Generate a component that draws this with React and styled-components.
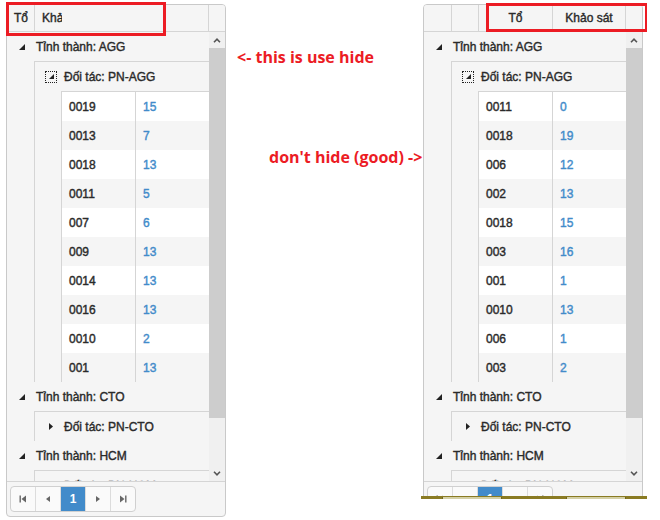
import React from 'react';
import styled, { createGlobalStyle } from 'styled-components';

const GlobalStyle = createGlobalStyle`
  html, body { margin: 0; padding: 0; background: #fff; }
  body { font-family: "Liberation Sans", Arial, sans-serif; }
`;

const LINE = '#d5d5d5';

const Page = styled.div`
  width: 660px;
  height: 520px;
  overflow: hidden;
  box-sizing: border-box;
  padding: 4px 0 0 6px;
  display: flex;
  align-items: flex-start;
`;

const GridWrap = styled.div`
  position: relative;
  width: 220px;
  flex-shrink: 0;
`;

const Frame = styled.div`
  width: 220px;
  height: 513px;
  box-sizing: border-box;
  border: 1px solid #c9c9c9;
  border-radius: 4px;
  background: #f5f5f5;
  display: flex;
  flex-direction: column;
  overflow: hidden;
  font: 12px "Liberation Sans", Arial, sans-serif;
  color: #2a2a2a;
  -webkit-text-stroke: 0.4px currentColor;
`;

const HeaderRow = styled.div`
  display: flex;
  height: 26px;
  flex-shrink: 0;
  border-bottom: 1px solid ${LINE};
  background: #f5f5f5;
`;

const HeaderCell = styled.div`
  width: ${(p) => p.$w}px;
  box-sizing: border-box;
  flex-shrink: 0;
  border-right: ${(p) => (p.$last ? 'none' : `1px solid ${LINE}`)};
  padding: 0 7px;
  display: flex;
  align-items: center;
  justify-content: ${(p) => (p.$center ? 'center' : 'flex-start')};
  white-space: nowrap;
  overflow: hidden;
`;

const ClippedLabel = styled.span`
  display: inline-block;
  max-width: ${(p) => p.$max}px;
  overflow: hidden;
  white-space: nowrap;
`;

const Body = styled.div`
  display: flex;
  height: 449px;
  flex-shrink: 0;
`;

const Content = styled.div`
  width: 202px;
  flex-shrink: 0;
  overflow: hidden;
`;

const ScrollBar = styled.div`
  width: 16px;
  display: flex;
  flex-direction: column;
  background: #f0f0f0;
`;

const ScrollBtn = styled.div`
  height: 16px;
  flex-shrink: 0;
  display: flex;
  align-items: center;
  justify-content: center;
`;

const Thumb = styled.div`
  height: 370px;
  flex-shrink: 0;
  background: #cdcdcd;
`;

const Track = styled.div`
  flex: 1;
`;

const L1Row = styled.div`
  height: 29px;
  display: flex;
  align-items: center;
  padding-left: 12px;
  gap: 11px;
  white-space: nowrap;
`;

const L1Children = styled.div`
  margin-left: 27px;
  border-left: 1px solid ${LINE};
`;

const L2Row = styled.div`
  height: 29px;
  border-top: 1px solid ${LINE};
  display: flex;
  align-items: center;
  padding-left: 10px;
  gap: 7px;
  white-space: nowrap;
`;

const IconBox = styled.span`
  width: 12px;
  height: 12px;
  box-sizing: border-box;
  display: flex;
  align-items: center;
  justify-content: center;
  border: 1px dotted ${(p) => (p.$focus ? '#222' : 'transparent')};
`;

const DataBlock = styled.div`
  margin-left: 26px;
  border-left: 1px solid ${LINE};
  border-top: 1px solid ${LINE};
`;

const DataRow = styled.div`
  display: flex;
  height: 29px;
  background: ${(p) => (p.$alt ? '#f5f5f5' : '#fff')};
`;

const DataCell = styled.div`
  width: 73px;
  flex-shrink: 0;
  box-sizing: border-box;
  padding-left: 7px;
  display: flex;
  align-items: center;
  color: ${(p) => (p.$link ? '#428bca' : '#2a2a2a')};
  & + & {
    width: 74px;
    border-left: 1px solid ${LINE};
  }
`;

const PagerBar = styled.div`
  height: 34px;
  flex-shrink: 0;
  border-top: 1px solid ${LINE};
  padding: 4px 0 0 3px;
  box-sizing: content-box;
`;

const PagerGroup = styled.div`
  display: inline-flex;
  height: 26px;
  box-sizing: border-box;
  border: 1px solid #d0d0d0;
  border-radius: 4px;
  overflow: hidden;
  background: #fafafa;
`;

const PageBtn = styled.div`
  width: 24px;
  height: 24px;
  display: flex;
  align-items: center;
  justify-content: center;
  background: ${(p) => (p.$active ? '#428bca' : 'transparent')};
  color: ${(p) => (p.$active ? '#fff' : '#555')};
  font-weight: bold;
  -webkit-text-stroke: 0;
  & + & {
    border-left: 1px solid #dcdcdc;
  }
`;

const RedBox = styled.div`
  position: absolute;
  left: ${(p) => p.$x}px;
  top: ${(p) => p.$y}px;
  width: ${(p) => p.$w}px;
  height: ${(p) => p.$h}px;
  box-sizing: border-box;
  border: 3px solid #ec1c24;
  pointer-events: none;
`;

const Middle = styled.div`
  width: 195px;
  flex-shrink: 0;
  display: flex;
  flex-direction: column;
  font: bold 16px "Open Sans", "Liberation Sans", sans-serif;
  line-height: 22px;
  color: #ec1c24;
`;

const Note = styled.div`
  margin-top: ${(p) => p.$top}px;
  margin-left: ${(p) => p.$left}px;
  white-space: nowrap;
`;

const RightCol = styled.div`
  width: 226px;
  margin-top: -2px;
  flex-shrink: 0;
  display: flex;
  flex-direction: column;
`;

const ClipBox = styled.div`
  height: 494px;
  padding: 2px 0 0 2px;
  box-sizing: border-box;
  overflow: hidden;
`;

const Strip = styled.div`
  height: 3px;
  width: 226px;
  background: #8a7b23;
  position: relative;
`;

const StripBox = styled.div`
  position: absolute;
  left: ${(p) => p.$x}px;
  width: ${(p) => p.$w}px;
  top: 1px;
  height: 2px;
  background: #d4d0a6;
  border-left: 1px solid #6f651c;
  border-right: 1px solid #6f651c;
`;

const Collapse = ({ size = 6 }) => (
  <svg width={size} height={size} viewBox="0 0 6 6">
    <polygon points="6,0 6,6 0,6" fill="#222" />
  </svg>
);

const Expand = () => (
  <svg width="4" height="7" viewBox="0 0 4 7">
    <polygon points="0,0 4,3.5 0,7" fill="#222" />
  </svg>
);

const Chevron = ({ up }) => (
  <svg width="8" height="5" viewBox="0 0 8 5">
    <polyline
      points={up ? '1,4.2 4,1.2 7,4.2' : '1,0.8 4,3.8 7,0.8'}
      fill="none"
      stroke="#555"
      strokeWidth="1.6"
    />
  </svg>
);

const PagerIcon = ({ kind }) => {
  const c = '#666';
  if (kind === 'first')
    return (
      <svg width="8" height="8" viewBox="0 0 8 8">
        <rect x="0.5" y="0.5" width="1.4" height="7" fill={c} />
        <polygon points="7,0.5 7,7.5 2.5,4" fill={c} />
      </svg>
    );
  if (kind === 'prev')
    return (
      <svg width="6" height="8" viewBox="0 0 6 8">
        <polygon points="5,1 5,7 1,4" fill={c} />
      </svg>
    );
  if (kind === 'next')
    return (
      <svg width="6" height="8" viewBox="0 0 6 8">
        <polygon points="1,1 1,7 5,4" fill={c} />
      </svg>
    );
  return (
    <svg width="8" height="8" viewBox="0 0 8 8">
      <polygon points="1,0.5 1,7.5 5.5,4" fill={c} />
      <rect x="6.1" y="0.5" width="1.4" height="7" fill={c} />
    </svg>
  );
};

const leftRows = [
  ['0019', 15], ['0013', 7], ['0018', 13], ['0011', 5], ['007', 6],
  ['009', 13], ['0014', 13], ['0016', 13], ['0010', 2], ['001', 13],
];

const rightRows = [
  ['0011', 0], ['0018', 19], ['006', 12], ['002', 13], ['0018', 15],
  ['003', 16], ['001', 1], ['0010', 13], ['006', 1], ['003', 2],
];

function GridBody({ rows }) {
  return (
    <Content>
      <L1Row>
        <Collapse />
        <span>Tỉnh thành: AGG</span>
      </L1Row>
      <L1Children>
        <L2Row>
          <IconBox $focus>
            <Collapse size={5} />
          </IconBox>
          <span>Đối tác: PN-AGG</span>
        </L2Row>
        <DataBlock>
          {rows.map(([code, n], i) => (
            <DataRow key={i} $alt={i % 2 === 1}>
              <DataCell>{code}</DataCell>
              <DataCell $link>{n}</DataCell>
            </DataRow>
          ))}
        </DataBlock>
      </L1Children>
      <L1Row>
        <Collapse />
        <span>Tỉnh thành: CTO</span>
      </L1Row>
      <L1Children>
        <L2Row>
          <IconBox>
            <Expand />
          </IconBox>
          <span>Đối tác: PN-CTO</span>
        </L2Row>
      </L1Children>
      <L1Row>
        <Collapse />
        <span>Tỉnh thành: HCM</span>
      </L1Row>
      <L1Children>
        <L2Row>
          <IconBox>
            <Expand />
          </IconBox>
          <span>Đối tác: PN-HCM</span>
        </L2Row>
      </L1Children>
    </Content>
  );
}

function Grid({ hidden, rows }) {
  return (
    <Frame>
      <HeaderRow>
        {hidden ? (
          <>
            <HeaderCell $w={28}>Tổ</HeaderCell>
            <HeaderCell $w={174}>
              <ClippedLabel $max={20}>Khảo sát</ClippedLabel>
            </HeaderCell>
          </>
        ) : (
          <>
            <HeaderCell $w={28} />
            <HeaderCell $w={27} />
            <HeaderCell $w={74} $center>Tổ</HeaderCell>
            <HeaderCell $w={73} $center>Khảo sát</HeaderCell>
          </>
        )}
        <HeaderCell $w={16} $last />
      </HeaderRow>
      <Body>
        <GridBody rows={rows} />
        <ScrollBar>
          <ScrollBtn><Chevron up /></ScrollBtn>
          <Thumb />
          <Track />
          <ScrollBtn><Chevron /></ScrollBtn>
        </ScrollBar>
      </Body>
      <PagerBar>
        <PagerGroup>
          <PageBtn><PagerIcon kind="first" /></PageBtn>
          <PageBtn><PagerIcon kind="prev" /></PageBtn>
          <PageBtn $active>1</PageBtn>
          <PageBtn><PagerIcon kind="next" /></PageBtn>
          <PageBtn><PagerIcon kind="last" /></PageBtn>
        </PagerGroup>
      </PagerBar>
    </Frame>
  );
}

export default function App() {
  return (
    <>
      <GlobalStyle />
      <Page>
        <GridWrap>
          <Grid hidden rows={leftRows} />
          <RedBox $x={0} $y={-2} $w={160} $h={34} />
        </GridWrap>
        <Middle>
          <Note $top={42} $left={11}>&lt;- this is use hide</Note>
          <Note $top={78} $left={43}>don't hide (good) -&gt;</Note>
        </Middle>
        <RightCol>
          <ClipBox>
            <GridWrap>
              <Grid rows={rightRows} />
              <RedBox $x={63} $y={-1} $w={162} $h={29} />
            </GridWrap>
          </ClipBox>
          <Strip>
            <StripBox $x={21} $w={58} />
            <StripBox $x={145} $w={58} />
          </Strip>
        </RightCol>
      </Page>
    </>
  );
}
